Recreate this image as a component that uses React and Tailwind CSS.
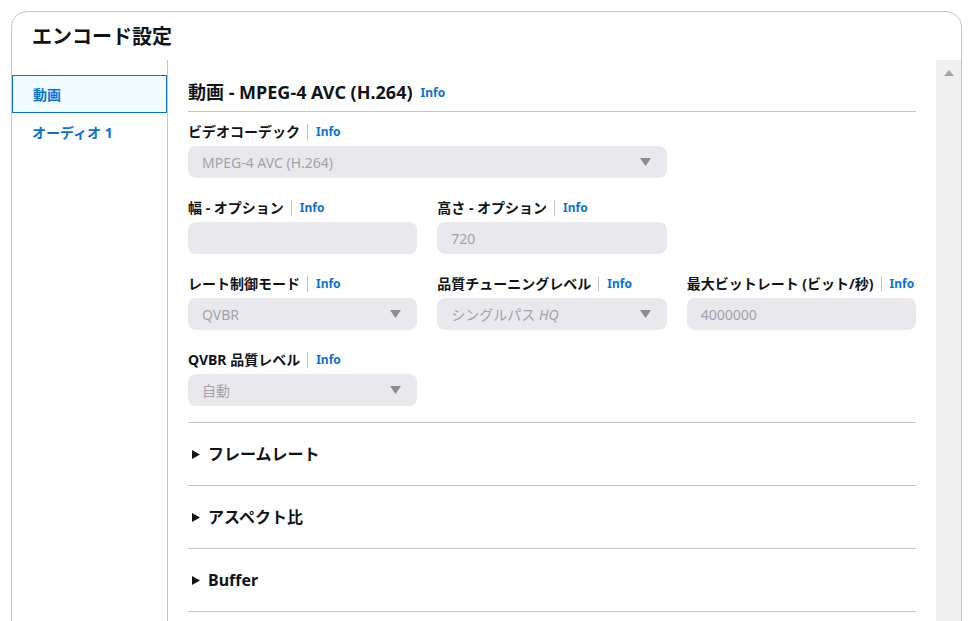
import React from 'react';

const FONT = { fontFamily: '"Noto Sans", "Noto Sans CJK JP", sans-serif' };

const Caret = () => (
  <svg width="11" height="8" viewBox="0 0 11 8" className="shrink-0">
    <path d="M0 0 H11 L5.5 8 Z" fill="#8c8c94" />
  </svg>
);

const Label = ({ children }) => (
  <div className="flex items-center h-5 mb-1 whitespace-nowrap">
    <span className="text-[14px] font-bold text-[#0f141a] leading-5">{children}</span>
    <span className="ml-[7px] pl-[8px] border-l border-[#c6c6cd] h-4 flex items-center">
      <span className="text-[12px] font-bold text-[#0972d3] leading-4">Info</span>
    </span>
  </div>
);

const SelectBox = ({ value }) => (
  <div className="h-8 rounded-lg bg-[#e9e9ed] flex items-center justify-between pl-[14px] pr-4">
    <span className="text-[14px] text-[#a2a2aa]">{value}</span>
    <Caret />
  </div>
);

const InputBox = ({ value }) => (
  <div className="h-8 rounded-lg bg-[#e9e9ed] flex items-center pl-[14px]">
    <span className="text-[14px] text-[#a2a2aa]">{value}</span>
  </div>
);

const Expander = ({ title }) => (
  <div className="border-b border-[#c6c6cd] h-[63px] flex items-center">
    <svg width="8" height="9" viewBox="0 0 8 9" className="ml-[4px] mr-[8px]">
      <path d="M0 0 L8 4.5 L0 9 Z" fill="#0f141a" />
    </svg>
    <span className="text-[16px] font-bold text-[#0f141a]">{title}</span>
  </div>
);

export default function App() {
  return (
    <div className="h-screen overflow-hidden bg-white pl-[11px] pr-[15px] pt-[11px]" style={FONT}>
      <div className="h-[700px] border border-[#c6c6cd] rounded-2xl overflow-hidden flex flex-col">
        {/* Header */}
        <div className="h-[48px] shrink-0 pl-5 pt-[11px]">
          <h1 className="text-[20px] font-bold text-[#0f141a] leading-7">エンコード設定</h1>
        </div>

        <div className="flex flex-1 min-h-0">
          {/* Side navigation */}
          <div className="w-[156px] shrink-0 border-r border-[#c6c6cd] pt-[15px]">
            <div className="h-[38px] border border-[#0972d3] bg-[#f0fbff] flex items-center pl-5">
              <span className="text-[14px] font-bold text-[#0972d3]">動画</span>
            </div>
            <div className="h-[38px] flex items-center pl-5">
              <span className="text-[14px] font-bold text-[#0972d3]">オーディオ 1</span>
            </div>
          </div>

          {/* Content */}
          <div className="flex-1 px-5 pt-[20px]">
            <div className="border-b border-[#c6c6cd] pb-[7px] flex items-center">
              <h2 className="text-[18px] font-bold text-[#0f141a] leading-6">動画 - MPEG-4 AVC (H.264)</h2>
              <span className="ml-2 text-[12px] font-bold text-[#0972d3] mt-[2px]">Info</span>
            </div>

            <div className="grid grid-cols-3 gap-x-5 gap-y-5 pt-[10px] pb-4 border-b border-[#c6c6cd]">
              <div className="col-span-2">
                <Label>ビデオコーデック</Label>
                <SelectBox value="MPEG-4 AVC (H.264)" />
              </div>
              <div />

              <div>
                <Label>幅 - オプション</Label>
                <InputBox value="" />
              </div>
              <div>
                <Label>高さ - オプション</Label>
                <InputBox value="720" />
              </div>
              <div />

              <div>
                <Label>レート制御モード</Label>
                <SelectBox value="QVBR" />
              </div>
              <div>
                <Label>品質チューニングレベル</Label>
                <SelectBox value={<>シングルパス <i>HQ</i></>} />
              </div>
              <div>
                <Label>最大ビットレート (ビット/秒)</Label>
                <InputBox value="4000000" />
              </div>

              <div>
                <Label>QVBR 品質レベル</Label>
                <SelectBox value="自動" />
              </div>
            </div>

            <Expander title="フレームレート" />
            <Expander title="アスペクト比" />
            <Expander title="Buffer" />
          </div>

          {/* Scrollbar */}
          <div className="w-[25px] shrink-0 bg-[#f0f0f0] flex justify-center pt-[10px]">
            <svg width="10" height="6" viewBox="0 0 10 6">
              <path d="M5 0 L10 6 H0 Z" fill="#a3a3a3" />
            </svg>
          </div>
        </div>
      </div>
    </div>
  );
}
